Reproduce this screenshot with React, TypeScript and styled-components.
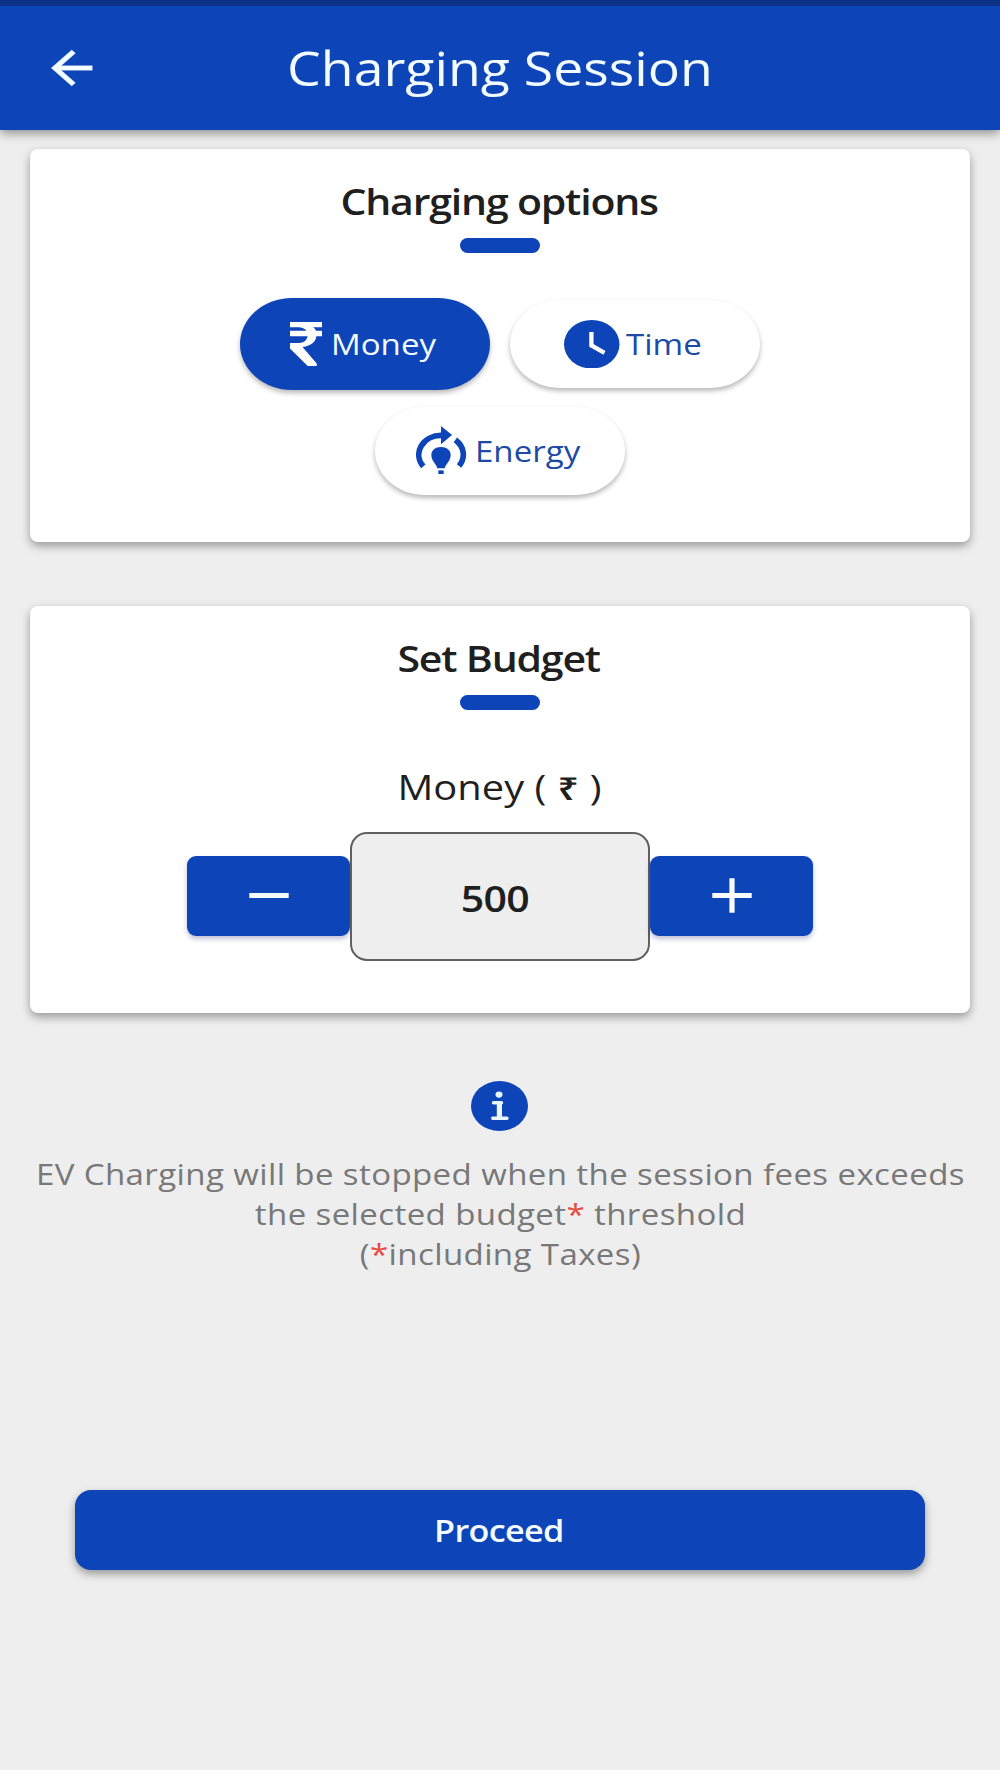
import React, { useState } from "react";
import styled, { createGlobalStyle, css } from "styled-components";

const blue = "#0d45b9";
const ink = "#1f1f1f";

const GlobalStyle = createGlobalStyle`
  * { box-sizing: border-box; }
  body { margin: 0; background: #fff; font-family: "Open Sans", "Noto Sans", sans-serif; }
  button { font: inherit; border: 0; margin: 0; padding: 0; cursor: pointer; }
  svg { display: block; flex: none; }
`;

const wide = css`
  display: block;
  white-space: nowrap;
  transform: scaleX(1.14);
`;

const Screen = styled.main`
  display: flex;
  flex-direction: column;
  height: 1770px;
  background: #eeeeee;
`;

const Header = styled.header`
  display: grid;
  grid-template-columns: 120px 1fr 120px;
  align-items: center;
  height: 130px;
  flex: none;
  border-top: 6px solid #0a3185;
  background: ${blue};
  box-shadow: 0 3px 10px rgba(0, 0, 0, 0.42);
`;

const BackButton = styled.button`
  padding-left: 40.5px;
  background: none;
  color: #f2fbff;
`;

const Title = styled.h1`
  ${wide}
  margin: 0;
  padding: 0 0 1px 0;
  font-size: 47px;
  font-weight: 400;
  line-height: 64px;
  text-align: center;
  color: #f2fbff;
`;

const Card = styled.section<{ $top: number; $height: number }>`
  display: flex;
  flex-direction: column;
  align-items: center;
  flex: none;
  height: ${(p) => p.$height}px;
  margin: ${(p) => p.$top}px 30px 0;
  padding-top: 29px;
  border-radius: 8px;
  background: #fff;
  box-shadow: 0 4px 10px rgba(0, 0, 0, 0.36);
`;

const Heading = styled.h2`
  ${wide}
  margin: 0;
  padding-right: 1.5px;
  font-size: 36px;
  font-weight: 600;
  line-height: 48px;
  letter-spacing: -1.05px;
  color: ${ink};
`;

const Accent = styled.div`
  width: 80px;
  height: 14.5px;
  margin-top: 12px;
  border-radius: 8px;
  background: ${blue};
`;

const Options = styled.div`
  display: flex;
  flex-wrap: wrap;
  justify-content: center;
  align-items: center;
  gap: 17px 20px;
  width: 560px;
  margin-top: 45.5px;
`;

const Pill = styled.button<{ $active: boolean; $inset: number; $gap: number }>`
  display: flex;
  align-items: center;
  gap: ${(p) => p.$gap}px;
  width: 250px;
  height: ${(p) => (p.$active ? 91.5 : 88)}px;
  padding-left: ${(p) => p.$inset}px;
  border-radius: 52px / 46px;
  background: ${(p) => (p.$active ? blue : "#fff")};
  color: ${(p) => (p.$active ? "#f2fbff" : "#1c4aa6")};
  box-shadow: 0 3px 5px rgba(0, 0, 0, 0.28);
`;

const PillLabel = styled.span`
  ${wide}
  transform-origin: left center;
  font-size: 29px;
  line-height: 40px;
`;

const FieldLabel = styled.label`
  ${wide}
  margin-top: 54.5px;
  padding-right: 0.8px;
  font-size: 35px;
  line-height: 46px;
  color: ${ink};
`;

const Rupee = styled.span`
  display: inline-block;
  width: 20px;
  text-align: center;
  font-size: 32px;
  font-weight: 600;
`;

const Stepper = styled.div`
  display: flex;
  align-items: center;
  margin-top: 21px;
`;

const StepButton = styled.button`
  display: flex;
  justify-content: center;
  align-items: center;
  width: 163px;
  height: 80px;
  border-radius: 9px;
  background: ${blue};
  box-shadow: 0 3px 5px rgba(20, 30, 110, 0.28);
`;

const Amount = styled.output`
  display: flex;
  justify-content: center;
  align-items: center;
  width: 300px;
  height: 128.5px;
  padding: 6px 10px 0 0;
  border: 2px solid #606060;
  border-radius: 17px;
  background: #eeeeee;
`;

const AmountText = styled.span`
  ${wide}
  font-size: 36px;
  font-weight: 600;
  line-height: 48px;
  letter-spacing: -0.7px;
  color: ${ink};
`;

const Notice = styled.section`
  display: flex;
  flex-direction: column;
  align-items: center;
  margin-top: 68px;
`;

const NoticeText = styled.p`
  ${wide}
  margin: 23px 0 0;
  font-size: 29px;
  line-height: 40px;
  letter-spacing: 0.33px;
  text-align: center;
  color: #787878;
`;

const Star = styled.span`
  color: #e8493f;
`;

const Proceed = styled.button`
  display: flex;
  justify-content: center;
  align-items: center;
  flex: none;
  height: 80px;
  margin: 216px 75px 0;
  padding: 2px 2px 0 0;
  border-radius: 16px;
  background: ${blue};
  box-shadow: 0 4px 8px rgba(0, 0, 0, 0.36);
`;

const ProceedText = styled.span`
  ${wide}
  font-size: 30px;
  font-weight: 600;
  line-height: 40px;
  letter-spacing: -0.6px;
  color: #f2fbff;
`;

const BackIcon = () => (
  <svg width="61.5" height="54" viewBox="0 0 24 24" preserveAspectRatio="none" fill="currentColor">
    <path d="M20 11H7.83l5.59-5.59L12 4l-8 8 8 8 1.41-1.41L7.83 13H20v-2z" stroke="currentColor" strokeWidth="0.15" />
  </svg>
);

const RupeeIcon = () => (
  <svg width="32" height="44" viewBox="0 0 32 44" fill="#fff">
    <path d="M0 0H32V5.3H23C24.5 6.3 25.4 7.4 26 8.7H32V14.3H26.4C25.6 20 21.5 23.8 12.5 25L26.7 41.5V44H17.7L0 26.5V21H9C13.5 21 16.8 18.5 17.6 14.3H0V8.7H16.5C14.8 6.5 12 5.3 8.5 5.3H0Z" />
  </svg>
);

const ClockIcon = () => (
  <svg width="55.5" height="48.5" viewBox="0 0 55.5 48.5">
    <ellipse cx="27.75" cy="24.25" rx="27.75" ry="24.25" fill={blue} />
    <path d="M27.4 12V25.5L40.5 32.8" fill="none" stroke="#fff" strokeWidth="4.3" />
  </svg>
);

const EnergyIcon = () => (
  <svg width="50.7" height="48.7" viewBox="200 102 152 146" fill={blue}>
    <path d="M222 223A67 58 0 0 1 276 130M318 143.5A67 58 0 0 1 329 222" fill="none" stroke={blue} strokeWidth="17" />
    <path d="M275 102L308 129L275 157Z" />
    <path d="M264 229C261 215 246 208 246 189C246 175 258 165 275 165C292 165 304 175 304 189C304 208 289 215 286 229Z" />
    <path d="M267 235H283V246H267Z" />
  </svg>
);

const MinusIcon = () => (
  <svg width="40" height="36" viewBox="0 0 40 36">
    <path d="M0.3 17.5H39.7" stroke="#f2fbff" strokeWidth="5.2" />
  </svg>
);

const PlusIcon = () => (
  <svg width="40" height="36" viewBox="0 0 40 36">
    <path d="M0.3 17.5H39.7M20 0.2V34.8" stroke="#f6fcff" strokeWidth="5.2" />
  </svg>
);

const InfoIcon = () => (
  <svg width="59" height="50" viewBox="0 0 59 50">
    <ellipse cx="28.5" cy="25" rx="28.5" ry="25" fill={blue} />
    <ellipse cx="28" cy="13.6" rx="3.5" ry="3.1" fill="#e9f6ff" />
    <path d="M22.5 21.8H30.5M21.7 37.3H36" fill="none" stroke="#e9f6ff" strokeWidth="3.4" strokeLinecap="round" />
    <path d="M25.8 20.2H31V38H25.8Z" fill="#e9f6ff" />
  </svg>
);

const options = [
  { name: "Money", Icon: RupeeIcon, inset: 50.3, gap: 9.2 },
  { name: "Time", Icon: ClockIcon, inset: 54.2, gap: 6 },
  { name: "Energy", Icon: EnergyIcon, inset: 41, gap: 8.3 },
];

export default function App() {
  const [mode, setMode] = useState("Money");
  const [amount, setAmount] = useState(500);

  return (
    <>
      <GlobalStyle />
      <Screen>
        <Header>
          <BackButton aria-label="Back">
            <BackIcon />
          </BackButton>
          <Title>Charging Session</Title>
        </Header>

        <Card $top={19} $height={393}>
          <Heading>Charging options</Heading>
          <Accent />
          <Options>
            {options.map(({ name, Icon, inset, gap }) => (
              <Pill key={name} $active={mode === name} $inset={inset} $gap={gap} onClick={() => setMode(name)}>
                <Icon />
                <PillLabel>{name}</PillLabel>
              </Pill>
            ))}
          </Options>
        </Card>

        <Card $top={64} $height={407}>
          <Heading>Set Budget</Heading>
          <Accent />
          <FieldLabel>
            Money ( <Rupee>₹</Rupee> )
          </FieldLabel>
          <Stepper>
            <StepButton aria-label="Decrease" onClick={() => setAmount(amount - 50)}>
              <MinusIcon />
            </StepButton>
            <Amount>
              <AmountText>{amount}</AmountText>
            </Amount>
            <StepButton aria-label="Increase" onClick={() => setAmount(amount + 50)}>
              <PlusIcon />
            </StepButton>
          </Stepper>
        </Card>

        <Notice>
          <InfoIcon />
          <NoticeText>
            EV Charging will be stopped when the session fees exceeds
            <br />
            the selected budget<Star>*</Star> threshold
            <br />(<Star>*</Star>including Taxes)
          </NoticeText>
        </Notice>

        <Proceed>
          <ProceedText>Proceed</ProceedText>
        </Proceed>
      </Screen>
    </>
  );
}
